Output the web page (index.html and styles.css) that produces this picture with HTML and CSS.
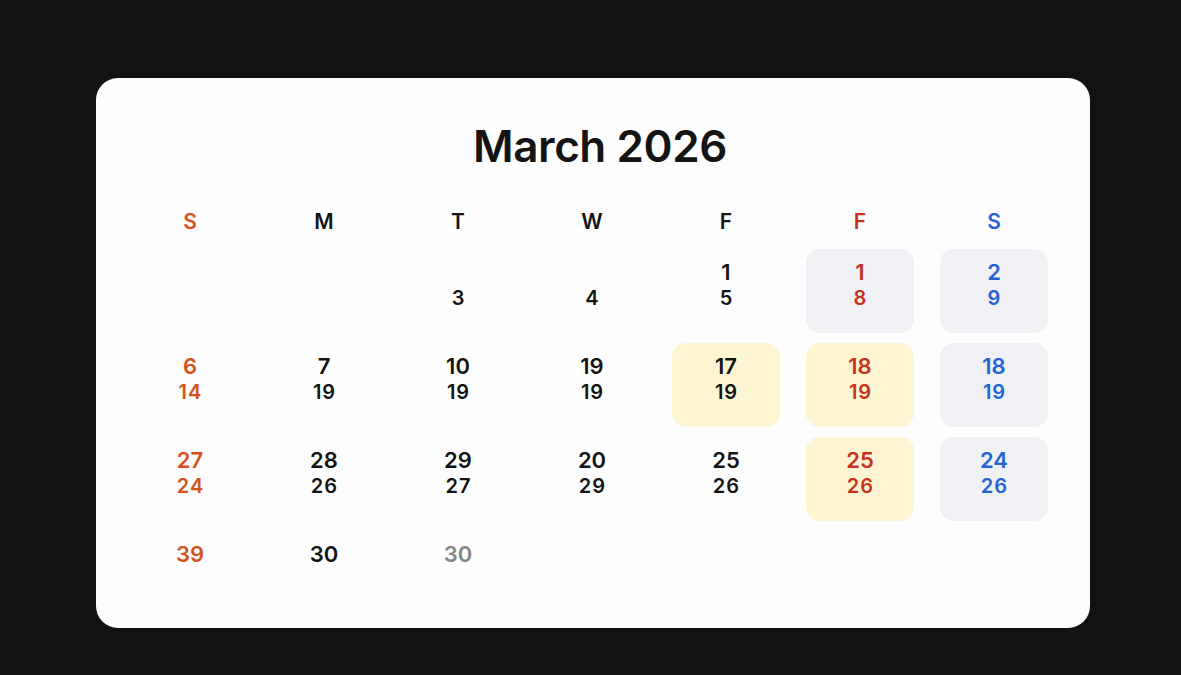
FILE: index.html
```html
<!DOCTYPE html>
<html>
<head>
<meta charset="utf-8">
<link rel="stylesheet" href="styles.css">
</head>
<body>
<div class="stage">
  <div class="card">
    <h1 class="title">March 2026</h1>
    <div class="grid">
      <div class="head sun">S</div>
      <div class="head">M</div>
      <div class="head">T</div>
      <div class="head">W</div>
      <div class="head">F</div>
      <div class="head fri">F</div>
      <div class="head sat">S</div>

      <div class="cell sun"></div>
      <div class="cell"></div>
      <div class="cell"><span class="a"></span><span class="b">3</span></div>
      <div class="cell"><span class="a"></span><span class="b">4</span></div>
      <div class="cell"><span class="a">1</span><span class="b">5</span></div>
      <div class="cell fri gray"><span class="a">1</span><span class="b">8</span></div>
      <div class="cell sat gray"><span class="a">2</span><span class="b">9</span></div>

      <div class="cell sun"><span class="a">6</span><span class="b">14</span></div>
      <div class="cell"><span class="a">7</span><span class="b">19</span></div>
      <div class="cell"><span class="a">10</span><span class="b">19</span></div>
      <div class="cell"><span class="a">19</span><span class="b">19</span></div>
      <div class="cell yellow"><span class="a">17</span><span class="b">19</span></div>
      <div class="cell fri yellow"><span class="a">18</span><span class="b">19</span></div>
      <div class="cell sat gray"><span class="a">18</span><span class="b">19</span></div>

      <div class="cell sun"><span class="a">27</span><span class="b">24</span></div>
      <div class="cell"><span class="a">28</span><span class="b">26</span></div>
      <div class="cell"><span class="a">29</span><span class="b">27</span></div>
      <div class="cell"><span class="a">20</span><span class="b">29</span></div>
      <div class="cell"><span class="a">25</span><span class="b">26</span></div>
      <div class="cell fri yellow"><span class="a">25</span><span class="b">26</span></div>
      <div class="cell sat gray"><span class="a">24</span><span class="b">26</span></div>

      <div class="cell last sun"><span class="a">39</span></div>
      <div class="cell last"><span class="a">30</span></div>
      <div class="cell last muted"><span class="a">30</span></div>
    </div>
  </div>
</div>
</body>
</html>
```

FILE: styles.css
```css
html, body {
  margin: 0;
  padding: 0;
  background: #121212;
}
body {
  width: 1181px;
  height: 675px;
  overflow: hidden;
  font-family: Inter, "Liberation Sans", sans-serif;
  color: #141414;
}
.stage {
  padding: 78px 0 0 96px;
}
.card {
  width: 994px;
  height: 550px;
  box-sizing: border-box;
  background: #fdfdfd;
  border-radius: 22px;
  padding: 40px 0 0 0;
}
.title {
  margin: 0;
  text-align: center;
  padding-left: 14px;
  font-size: 44px;
  line-height: 56px;
  font-weight: 600;
  letter-spacing: -0.4px;
  color: #141414;
}
.grid {
  margin: 36px 0 0 40px;
  display: grid;
  grid-template-columns: repeat(7, 108px);
  column-gap: 26px;
  row-gap: 10px;
}
.head {
  text-align: center;
  font-size: 21px;
  line-height: 24px;
  font-weight: 600;
  margin-bottom: 5px;
}
.cell {
  height: 84px;
  box-sizing: border-box;
  border-radius: 14px;
  padding-top: 10px;
  display: flex;
  flex-direction: column;
  align-items: center;
  font-weight: 600;
}
.cell.last { height: auto; }
.a {
  font-size: 22px;
  line-height: 26px;
  height: 26px;
}
.b {
  font-size: 20px;
  line-height: 27px;
  font-weight: 600;
  letter-spacing: 1px;
  padding-left: 1px;
}
.sun { color: #d5521c; }
.fri { color: #c7321c; }
.sat { color: #2563d4; }
.muted { color: #858585; }
.gray { background: #eff1f4; }
.yellow { background: #fdf5d2; }
```
